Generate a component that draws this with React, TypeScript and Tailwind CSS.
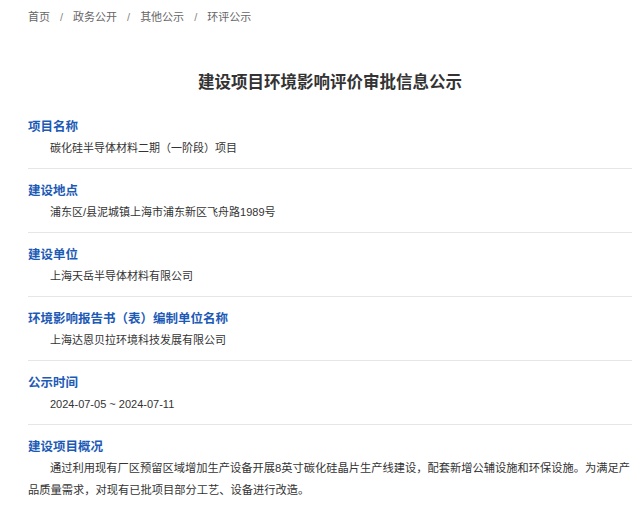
import React from 'react';

const crumbs = ['首页', '政务公开', '其他公示', '环评公示'];

const items = [
  { label: '项目名称', value: '碳化硅半导体材料二期（一阶段）项目' },
  { label: '建设地点', value: '浦东区/县泥城镇上海市浦东新区飞舟路1989号' },
  { label: '建设单位', value: '上海天岳半导体材料有限公司' },
  { label: '环境影响报告书（表）编制单位名称', value: '上海达恩贝拉环境科技发展有限公司' },
  { label: '公示时间', value: '2024-07-05 ~ 2024-07-11' },
];

export default function App() {
  return (
    <div
      className="min-h-screen bg-white pl-[28px] pr-[8px]"
      style={{ fontFamily: '"Liberation Sans", "Noto Sans CJK SC", sans-serif' }}
    >
      <div className="flex items-center pt-[9px] text-[11px] leading-[16px] text-[#666]">
        {crumbs.map((c, i) => (
          <React.Fragment key={c}>
            {i > 0 && <span className="px-[10px] text-[#888]">/</span>}
            <span>{c}</span>
          </React.Fragment>
        ))}
      </div>

      <h1 className="mt-[45px] text-center text-[16.5px] font-bold leading-[24px] text-[#333]">
        建设项目环境影响评价审批信息公示
      </h1>

      <div className="mt-[11px]">
        {items.map((it) => (
          <div key={it.label} className="border-b border-[#e6e6e6] pt-[12px] pb-[10px]">
            <div className="text-[12.5px] font-bold leading-[20px] text-[#1d5ab6]">{it.label}</div>
            <div className="mt-[1px] pl-[22px] text-[11px] leading-[20px] text-[#333]">{it.value}</div>
          </div>
        ))}
        <div className="pt-[12px]">
          <div className="text-[12.5px] font-bold leading-[20px] text-[#1d5ab6]">建设项目概况</div>
          <p className="indent-[22px] text-[11.25px] leading-[22px] text-[#333]">
            通过利用现有厂区预留区域增加生产设备开展8英寸碳化硅晶片生产线建设，配套新增公辅设施和环保设施。为满足产品质量需求，对现有已批项目部分工艺、设备进行改造。
          </p>
        </div>
      </div>
    </div>
  );
}
